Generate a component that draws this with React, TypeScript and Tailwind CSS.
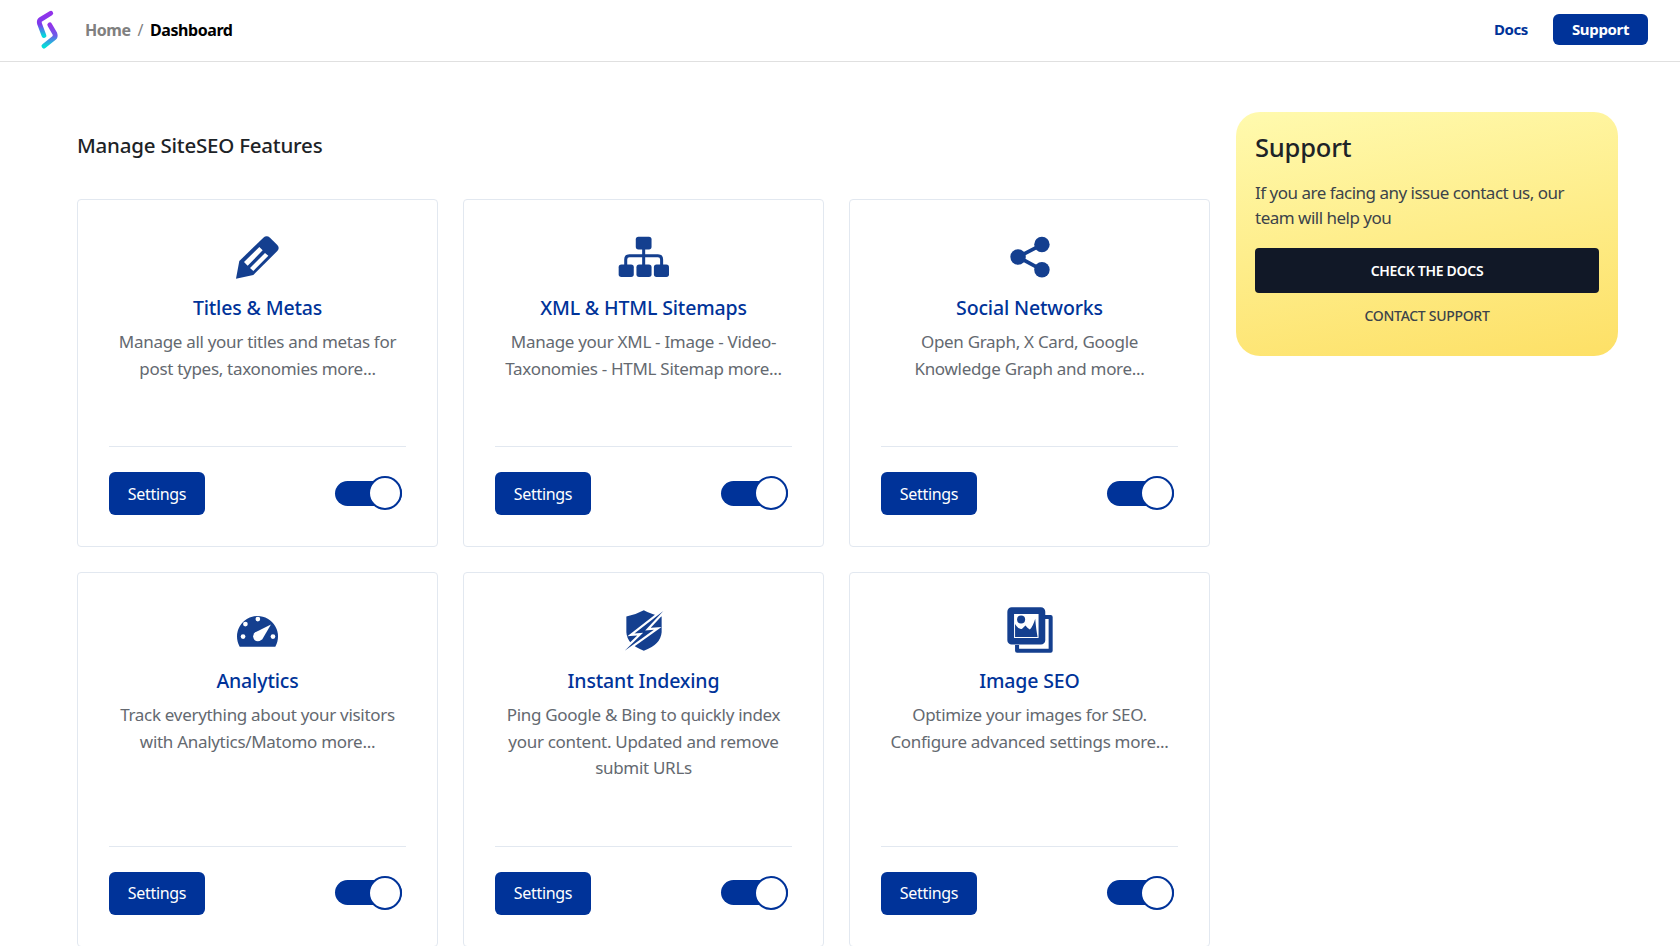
import type { ReactNode } from "react";

const iconClass = "fill-[#143f8f]";

function Logo() {
  return (
    <svg width="24" height="42" viewBox="105 28 70 122" fill="none">
      <defs>
        <linearGradient id="logoA" x1="0" y1="0" x2="0" y2="1">
          <stop offset="0" stopColor="#9333ea" />
          <stop offset="0.5" stopColor="#7c3aed" />
          <stop offset="1" stopColor="#06d6dc" />
        </linearGradient>
        <linearGradient id="logoB" x1="0" y1="0" x2="0" y2="1">
          <stop offset="0" stopColor="#9333ea" />
          <stop offset="0.5" stopColor="#6d5ce8" />
          <stop offset="1" stopColor="#06dcd8" />
        </linearGradient>
      </defs>
      <path d="M151 40 L122 58 Q116 62 118 70 L131 105" stroke="url(#logoA)" strokeWidth="14" strokeLinecap="round" strokeLinejoin="round" />
      <path d="M148 74 L163 100 Q166 108 160 113 L131 136" stroke="url(#logoB)" strokeWidth="14" strokeLinecap="round" strokeLinejoin="round" />
    </svg>
  );
}

function PencilIcon() {
  return (
    <svg width="45" height="45" viewBox="105 72 135 135">
      <path className={iconClass} d="M108 203 L118 150 L190 80 Q200 72 210 80 L232 102 Q240 111 232 120 L160 192 Z" />
      <path fill="#fff" d="M132 153 L178 108 L188 118 L143 164 Z M150 171 L195 126 L205 134 L160 180 Z" />
    </svg>
  );
}

function SitemapIcon() {
  return (
    <svg width="52" height="42" viewBox="85 48 155 125">
      <g className={iconClass}>
        <rect x="138" y="50" width="47" height="38" rx="8" />
        <rect x="87" y="133" width="45" height="37" rx="8" />
        <rect x="140" y="133" width="45" height="37" rx="8" />
        <rect x="192" y="133" width="45" height="37" rx="8" />
        <rect x="157" y="86" width="9" height="50" />
      </g>
      <path d="M108 136 V118 Q108 107 119 107 H204 Q215 107 215 118 V136" fill="none" stroke="#143f8f" strokeWidth="9" />
    </svg>
  );
}

function ShareIcon() {
  return (
    <svg width="42" height="44" viewBox="85 45 125 130">
      <path d="M183 73 L112 110 L183 148" fill="none" stroke="#143f8f" strokeWidth="11" />
      <g className={iconClass}>
        <circle cx="183" cy="73" r="23" />
        <circle cx="112" cy="110" r="23" />
        <circle cx="183" cy="148" r="23" />
      </g>
    </svg>
  );
}

function GaugeIcon() {
  return (
    <svg width="41" height="33" viewBox="110 45 122 98">
      <path className={iconClass} d="M118 142 A61 61 0 1 1 224 142 Z" />
      <g fill="#fff">
        <circle cx="135" cy="75" r="7" />
        <circle cx="172" cy="60" r="7" />
        <circle cx="128" cy="112" r="7" />
        <circle cx="217" cy="112" r="7" />
        <circle cx="172" cy="112" r="14" />
        <path d="M211 76 L184 122 L160 102 Z" />
      </g>
    </svg>
  );
}

function ShieldIcon() {
  return (
    <svg width="40" height="41" viewBox="102 29 117 122">
      <path className={iconClass} d="M160 30 Q185 44 213 48 V95 Q210 132 160 150 Q110 132 108 95 V48 Q135 44 160 30 Z" />
      <path
        fill="#fff"
        stroke="#fff"
        strokeWidth="13"
        d="M218 32 L132 99 L158 97 L103 150 L190 88 L164 90 Z"
      />
      <path fill="#143f8f" d="M218 32 L132 99 L158 97 L103 150 L190 88 L164 90 Z" />
    </svg>
  );
}

function ImageIcon() {
  return (
    <svg width="46" height="46" viewBox="81 21 137 137">
      <path fill="none" stroke="#143f8f" strokeWidth="12" strokeLinejoin="round" d="M190 51 H211 V151 H111 V134" />
      <rect x="92" y="32" width="93" height="91" rx="3" fill="none" stroke="#143f8f" strokeWidth="20" strokeLinejoin="round" />
      <g className={iconClass}>
        <circle cx="123" cy="58" r="12" />
        <path d="M105 110 V72 Q116 90 126 86 L136 76 Q142 84 149 88 Q158 80 165 56 Q168 90 172 110 Z" />
      </g>
    </svg>
  );
}

interface Feature {
  title: string;
  description: ReactNode;
  icon: ReactNode;
}

const features: Feature[] = [
  {
    title: "Titles & Metas",
    description: "Manage all your titles and metas for post types, taxonomies more...",
    icon: <PencilIcon />,
  },
  {
    title: "XML & HTML Sitemaps",
    description: "Manage your XML - Image - Video- Taxonomies - HTML Sitemap more...",
    icon: <SitemapIcon />,
  },
  {
    title: "Social Networks",
    description: "Open Graph, X Card, Google Knowledge Graph and more...",
    icon: <ShareIcon />,
  },
  {
    title: "Analytics",
    description: "Track everything about your visitors with Analytics/Matomo more...",
    icon: <GaugeIcon />,
  },
  {
    title: "Instant Indexing",
    description: "Ping Google & Bing to quickly index your content. Updated and remove submit URLs",
    icon: <ShieldIcon />,
  },
  {
    title: "Image SEO",
    description: "Optimize your images for SEO. Configure advanced settings more...",
    icon: <ImageIcon />,
  },
];

function Toggle() {
  return (
    <div className="relative -mt-px mr-1 flex h-[34px] w-[67px] items-center">
      <div className="h-[25px] w-full rounded-full bg-[#003399]" />
      <div className="absolute right-0 top-0 h-[34px] w-[34px] rounded-full border-2 border-[#003399] bg-white" />
    </div>
  );
}

function FeatureCard({ feature }: { feature: Feature }) {
  return (
    <div className="flex flex-col rounded border border-[#e2e8f0] bg-white p-[31px]">
      <div className="mt-px flex h-[50px] items-center justify-center">{feature.icon}</div>
      <h3 className="mt-[11px] text-center text-[19.5px] font-medium leading-[30px] tracking-[-0.15px] text-[#003399]">
        {feature.title}
      </h3>
      <p className="mb-16 mt-1.5 text-center text-[17px] leading-[26.5px] tracking-[-0.3px] text-[#646970]">
        {feature.description}
      </p>
      <div className="mt-auto flex items-center justify-between border-t border-[#e2e8f0] pt-[25px]">
        <button className="h-[43px] w-[96px] rounded-md bg-[#003399] text-[16px] tracking-[-0.3px] text-white">Settings</button>
        <Toggle />
      </div>
    </div>
  );
}

export default function App() {
  return (
    <div className="h-screen overflow-hidden bg-white font-['Noto_Sans',sans-serif]">
      <header className="flex h-[62px] items-center justify-between border-b border-[#e0e0e0] pb-0.5 pl-[35px] pr-[32px]">
        <div className="flex items-center">
          <Logo />
          <nav className="ml-[26px] flex items-center text-[16px] font-bold tracking-[-0.45px]">
            <span className="text-[#808080]">Home</span>
            <span className="mx-[7px] font-normal text-[#808080]">/</span>
            <span className="text-black">Dashboard</span>
          </nav>
        </div>
        <div className="flex items-center">
          <span className="text-[15px] font-bold tracking-[-0.4px] text-[#003399]">Docs</span>
          <button className="ml-[25px] h-[31px] w-[95px] rounded-md bg-[#003399] text-[15px] font-bold tracking-[-0.35px] text-white">
            Support
          </button>
        </div>
      </header>
      <main className="flex gap-[26px] pl-[77px] pr-[62px]">
        <section className="w-[1133px] shrink-0">
          <h2 className="mt-[67px] h-[70px] text-[20.5px] font-medium leading-[33px] tracking-[-0.22px] text-[#1d2327]">
            Manage SiteSEO Features
          </h2>
          <div className="grid grid-cols-3 gap-x-[25px] gap-y-[25px]">
            {features.map((f) => (
              <FeatureCard key={f.title} feature={f} />
            ))}
          </div>
        </section>
        <aside className="mt-[50px] flex h-[244px] w-[382px] flex-col rounded-3xl bg-[linear-gradient(170deg,#fffaae,#fde066)] px-[19px] pt-[17px]">
          <h2 className="text-[25.5px] font-medium leading-[36px] tracking-[-0.2px] text-[#1d2327]">Support</h2>
          <p className="mt-[15px] text-[17px] leading-[25px] tracking-[-0.5px] text-[#3c434a]">
            If you are facing any issue contact us, our team will help you
          </p>
          <button className="mt-[18px] h-[45px] w-full rounded bg-[#111827] text-[14px] font-semibold uppercase tracking-[-0.3px] text-white">
            Check the docs
          </button>
          <div className="mt-[12px] text-center text-[14px] font-medium uppercase leading-[22px] tracking-[-0.3px] text-[#3c434a]">
            Contact support
          </div>
        </aside>
      </main>
    </div>
  );
}
